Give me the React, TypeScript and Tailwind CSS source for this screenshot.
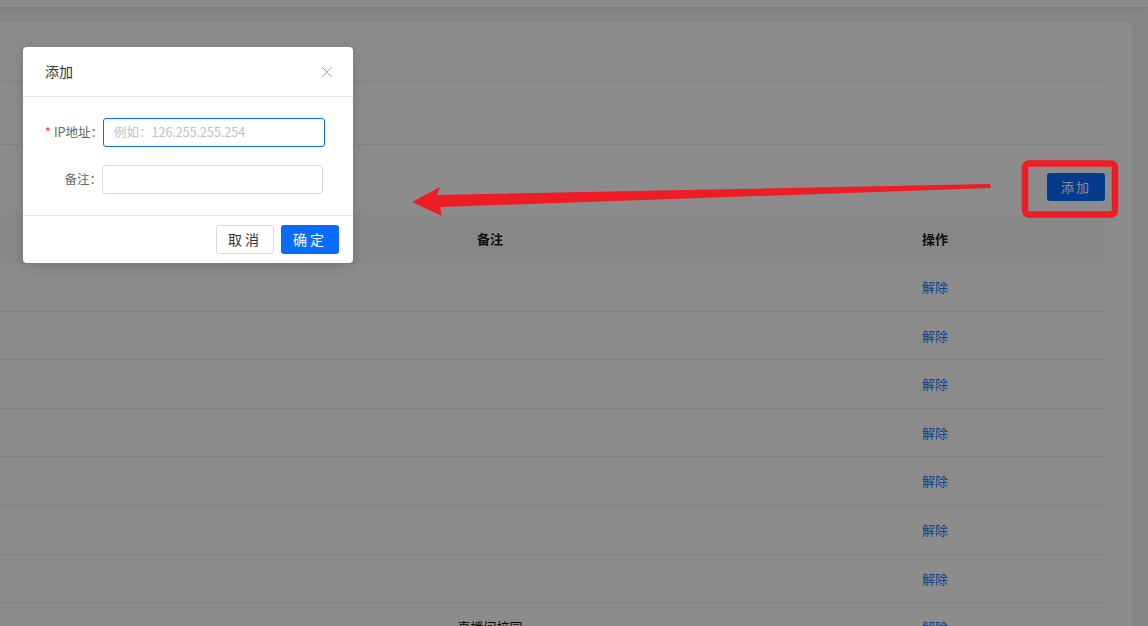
import React from 'react';
import { X } from 'lucide-react';

const rows = ['', '', '', '', '', '', '', '直播间校园'];

function Page() {
  return (
    <div className="flex h-full flex-col bg-[#f0f2f5]">
      <div className="h-[7px] shrink-0 bg-white shadow-[0_1px_4px_rgba(0,21,41,0.08)]" />
      <div className="mt-[15px] mr-[16px] flex-1 rounded-tr-[6px] bg-white pr-[27px]">
        <div className="h-[60px] border-b border-[#f0f0f0]" />
        <div className="h-[63px] border-b border-[#f0f0f0]" />
        <div className="flex h-[70px] justify-end pt-[28px]">
          <button className="h-[28px] w-[58px] rounded-[3px] bg-[#0a6cff] text-[13px] tracking-[2px] text-white">添加</button>
        </div>
        <div className="grid h-[48px] grid-cols-[280px_420px_170px_130px_1fr] items-center bg-[#f7f7f7] text-[13px] font-bold text-[#1a1a1a]">
          <div />
          <div className="text-center">备注</div>
          <div />
          <div className="text-center">操作</div>
          <div />
        </div>
        {rows.map((note, i) => (
          <div
            key={i}
            className="grid h-[48.6px] grid-cols-[280px_420px_170px_130px_1fr] items-center border-b border-[#efefef] text-[13px]"
          >
            <div />
            <div className="text-center text-[#111]">{note}</div>
            <div />
            <div className="text-center text-[#1c76ff]">解除</div>
            <div />
          </div>
        ))}
      </div>
    </div>
  );
}

function Modal() {
  return (
    <div className="absolute left-[23px] top-[47px] w-[330px] rounded-[4px] bg-white shadow-[0_3px_12px_rgba(0,0,0,0.15)]">
      <div className="flex h-[50px] items-center justify-between border-b border-[#e8e8e8] pl-[22px] pr-[17px]">
        <span className="text-[14px] text-[#333]">添加</span>
        <X size={18} strokeWidth={1.2} className="text-[#999]" />
      </div>
      <div className="flex flex-col gap-[18px] pb-[21px] pt-[21px]">
        <div className="flex items-center">
          <label className="w-[80px] text-right text-[12.5px] text-[#666]">
            <span className="mr-[3px] text-[#ff2a2a]">*</span>IP地址：
          </label>
          <div className="flex h-[29px] w-[222px] items-center rounded-[3px] border border-[#0a6cff] px-[10px] text-[12.5px] text-[#c0c0c0]">
            例如：126.255.255.254
          </div>
        </div>
        <div className="flex items-center">
          <label className="w-[79px] text-right text-[12.5px] text-[#666]">备注：</label>
          <div className="h-[29px] w-[221px] rounded-[3px] border border-[#d9d9d9]" />
        </div>
      </div>
      <div className="flex h-[48px] items-center justify-end gap-[7px] border-t border-[#e8e8e8] pr-[14px]">
        <button className="h-[29px] w-[58px] rounded-[3px] border border-[#d9d9d9] bg-white text-[14px] tracking-[3px] text-[#333]">取消</button>
        <button className="h-[29px] w-[58px] rounded-[3px] bg-[#0a6cff] text-[14px] tracking-[3px] text-white">确定</button>
      </div>
    </div>
  );
}

export default function App() {
  return (
    <div
      className="relative h-[626px] w-[1148px] overflow-hidden"
      style={{ fontFamily: '"Noto Sans CJK SC", "Noto Sans", sans-serif' }}
    >
      <Page />
      <div className="absolute inset-0 bg-black/45" />
      <Modal />
      <svg className="pointer-events-none absolute inset-0" width="1148" height="626" viewBox="0 0 1148 626">
        <polygon
          fill="#ee1c25"
          points="412,202 440,187 437,195 990,184 991,188 440,207 442,216"
        />
        <rect x="1025" y="163.5" width="90" height="51" rx="4" fill="none" stroke="#ee1c25" strokeWidth="6.5" />
      </svg>
    </div>
  );
}
